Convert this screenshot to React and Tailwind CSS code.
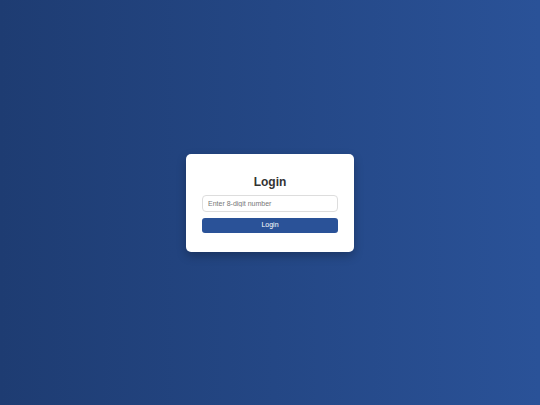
export default function App() {
  return (
    <div className="flex h-[405px] w-full items-center justify-center bg-gradient-to-r from-[#1e3c72] to-[#2a5298]">
      <div className="flex w-[168px] flex-col items-center rounded-[5px] bg-white px-4 pt-5 pb-[19px] shadow-[0_4px_10px_rgba(0,0,0,0.25)]">
        <h2 className="mb-[5px] text-[12px] font-bold leading-[16px] text-[#333] [font-family:'Liberation_Sans',Arial,sans-serif]">
          Login
        </h2>
        <input
          type="text"
          placeholder="Enter 8-digit number"
          className="h-[17px] w-full rounded-[4px] border border-[#ddd] px-[5px] text-[7px] text-[#333] outline-none placeholder:text-[#777] [font-family:'Liberation_Sans',Arial,sans-serif]"
        />
        <button className="mt-[6px] h-[15px] w-full rounded-[3px] bg-[#2a5298] text-[7px] text-white [font-family:'Liberation_Sans',Arial,sans-serif]">
          Login
        </button>
      </div>
    </div>
  );
}
